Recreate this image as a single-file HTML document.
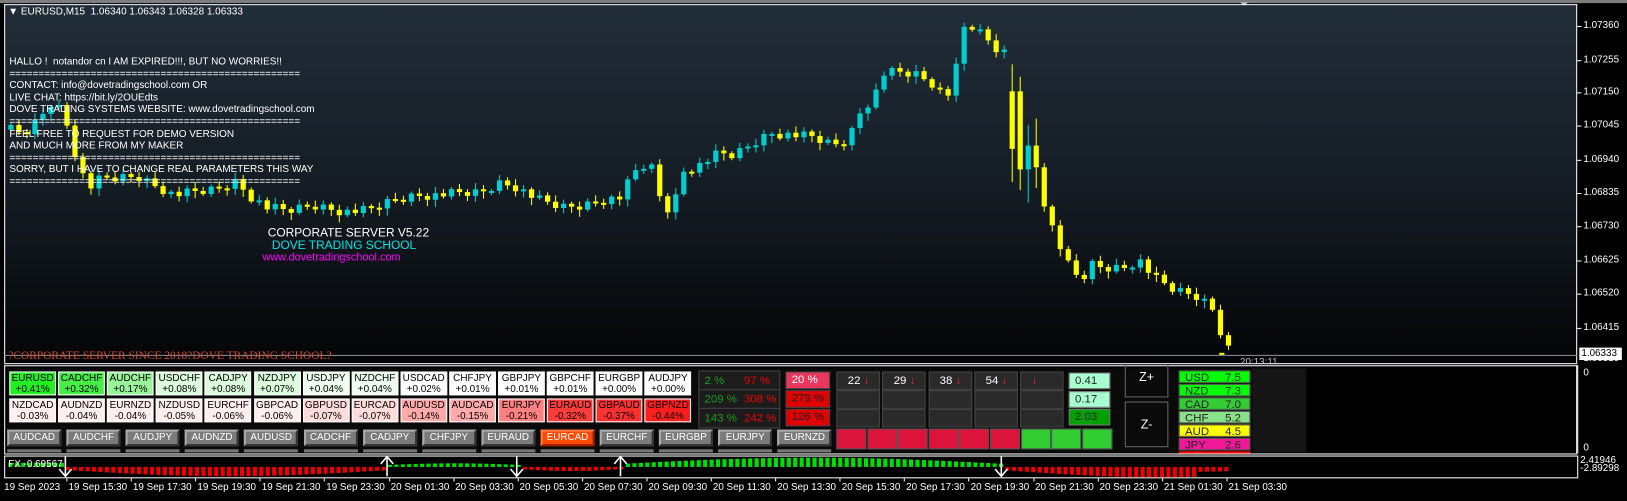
<!DOCTYPE html>
<html><head><meta charset="utf-8">
<style>
*{margin:0;padding:0;box-sizing:border-box}
html,body{width:1627px;height:501px;background:#000;overflow:hidden}
#w{position:absolute;left:0;top:0;width:1568px;height:483px;transform:scale(1.03763);transform-origin:0 0;font-family:"Liberation Sans",sans-serif;background:#000}
.a{position:absolute;white-space:nowrap}
#chart{position:absolute;left:4px;top:4px;width:1516px;height:346px;background:linear-gradient(#212d38 0%,#19222b 35%,#10161c 65%,#06080a 92%,#030405 100%);border-left:1px solid #fff;border-right:1px solid #fff;border-top:1px solid #fff}
.t{font-size:9.6px;color:#fff;line-height:11.6px}
.ax{font-size:9.5px;color:#fff;left:1526px}
.tk{position:absolute;left:1520px;width:4px;height:1px;background:#fff}
.tile{position:absolute;width:45px;height:23px;border:1px solid #fff;font-size:9.6px;line-height:10.5px;text-align:center;color:#000;padding-top:1px}
.btn{position:absolute;width:52px;height:16px;background:#7a7a7a;border:2px solid;border-color:#aaa #333 #333 #aaa;font-size:9.5px;color:#fff;text-align:center;line-height:12px}
.pb{position:absolute;background:#1c1c1c;border:1px solid #444;font-size:11px;line-height:18px}
.gb{position:absolute;width:42px;height:18px;background:#2a2a2a;border:1px solid #444;font-size:11px;color:#fff;line-height:16px;padding-left:10px}
.cs{position:absolute;left:1136px;width:69px;height:12px;font-size:11px;line-height:12px;color:#222;padding-left:5px;border:1px solid #555}
.cs b{font-weight:normal;position:absolute;right:8px}
.tl{position:absolute;top:464px;font-size:9.5px;color:#fff}
</style></head><body><div id="w">
<div class="a" style="left:0;top:0;width:1568px;height:3px;background:#7d7d7d"></div>
<div class="a" style="left:1195px;top:2px;width:0;height:0;border-left:4px solid transparent;border-right:4px solid transparent;border-top:4px solid #bbb"></div>
<div id="chart"></div>
<svg id="cs" class="a" style="left:0;top:0" width="1520" height="350"></svg>
<div class="a" style="left:8px;top:6px;font-size:9.6px;color:#fff">&#9660; EURUSD,M15&nbsp; 1.06340 1.06343 1.06328 1.06333</div>
<div class="a t" style="left:9px;top:54px">HALLO !&nbsp; notandor cn I AM EXPIRED!!!, BUT NO WORRIES!!<br>==================================================<br>CONTACT: info@dovetradingschool.com OR<br>LIVE CHAT: https://bit.ly/2OUEdts<br>DOVE TRADING SYSTEMS WEBSITE: www.dovetradingschool.com<br>==================================================<br>FEEL FREE TO REQUEST FOR DEMO VERSION<br>AND MUCH MORE FROM MY MAKER<br>==================================================<br>SORRY, BUT I HAVE TO CHANGE REAL PARAMETERS THIS WAY<br>==================================================</div>
<div class="a" style="left:258px;top:219px;font-size:11.5px;color:#fff">CORPORATE SERVER V5.22</div>
<div class="a" style="left:262px;top:231px;font-size:11.5px;color:#00e5e5">DOVE TRADING SCHOOL</div>
<div class="a" style="left:253px;top:242px;font-size:10.5px;color:#f0f">www.dovetradingschool.com</div>
<div class="a" style="left:4px;top:342px;width:1516px;height:1px;background:#8a8f96"></div>
<div class="a" style="left:8px;top:337px;font-family:'Liberation Serif',serif;font-size:11px;color:#d84a2a">?CORPORATE SERVER SINCE 2018?DOVE TRADING SCHOOL?</div>
<div class="a" style="left:1195px;top:345px;font-size:9.5px;color:#bbb;height:5px;overflow:hidden;line-height:10px">20:13:11</div>
<div class="a ax" style="top:19px">1.07360</div><div class="tk" style="top:25px"></div>
<div class="a ax" style="top:52px">1.07255</div><div class="tk" style="top:58px"></div>
<div class="a ax" style="top:83px">1.07150</div><div class="tk" style="top:89px"></div>
<div class="a ax" style="top:115px">1.07045</div><div class="tk" style="top:121px"></div>
<div class="a ax" style="top:148px">1.06940</div><div class="tk" style="top:154px"></div>
<div class="a ax" style="top:180px">1.06835</div><div class="tk" style="top:186px"></div>
<div class="a ax" style="top:212px">1.06730</div><div class="tk" style="top:218px"></div>
<div class="a ax" style="top:245px">1.06625</div><div class="tk" style="top:251px"></div>
<div class="a ax" style="top:277px">1.06520</div><div class="tk" style="top:283px"></div>
<div class="a ax" style="top:310px">1.06415</div><div class="tk" style="top:316px"></div>
<div class="a ax" style="top:342px;height:7px;overflow:hidden;line-height:8px">1.06310</div>
<div class="a" style="left:1522px;top:335px;width:41px;height:12px;background:#fff;color:#000;font-size:9.5px;line-height:12px;padding-left:2px">1.06333</div>
<div class="a" style="left:4px;top:350px;width:1516px;height:1px;background:#fff"></div>
<div class="a" style="left:4px;top:352px;width:1516px;height:85px;border:1px solid #fff;border-bottom:none"></div>
<div class="a" style="left:1520px;top:352px;width:1px;height:85px;background:#fff"></div>
<div class="a" style="left:1526px;top:354px;font-size:9.5px;color:#fff">0</div>
<div class="a" style="left:1526px;top:426px;font-size:9.5px;color:#fff">0</div>
<div class="a" style="left:7px;top:355px;width:1200px;height:81px;background:#0a0a0a"></div>
<div id="tiles"></div>
<div class="pb" style="left:673px;top:357px;width:79px;height:20px"><span style="position:absolute;left:5px;color:#1d9a1d">2 %</span><span style="position:absolute;left:43px;color:#e00">97 %</span></div>
<div class="pb" style="left:673px;top:375px;width:79px;height:20px"><span style="position:absolute;left:5px;color:#1d9a1d">209 %</span><span style="position:absolute;left:43px;color:#e00">308 %</span></div>
<div class="pb" style="left:673px;top:393px;width:79px;height:20px"><span style="position:absolute;left:5px;color:#1d9a1d">143 %</span><span style="position:absolute;left:43px;color:#e00">242 %</span></div>
<div class="pb" style="left:757px;top:358px;width:43px;height:17px;background:#e8365e;color:#fff;padding-left:5px;line-height:15px">20 %</div>
<div class="pb" style="left:757px;top:376px;width:43px;height:17px;background:#e00000;color:#222;padding-left:5px;line-height:15px">279 %</div>
<div class="pb" style="left:757px;top:394px;width:43px;height:17px;background:#e00000;color:#222;padding-left:5px;line-height:15px">126 %</div>
<div id="grid"></div>
<div class="a" style="left:1030px;top:359px;width:40px;height:16px;background:#a8ffd0;border:1px solid #777;font-size:11px;line-height:14px;padding-left:5px;color:#222">0.41</div>
<div class="a" style="left:1030px;top:377px;width:40px;height:16px;background:#a8ffd0;border:1px solid #777;font-size:11px;line-height:14px;padding-left:5px;color:#222">0.17</div>
<div class="a" style="left:1030px;top:394px;width:40px;height:16px;background:#00a000;border:1px solid #777;font-size:11px;line-height:14px;padding-left:5px;color:#222">2.03</div>
<div class="a" style="left:1084px;top:352px;width:42px;height:31px;border:1px solid #666;border-top:none;color:#fff;font-size:12px;text-align:center;line-height:22px">Z+</div>
<div class="a" style="left:1084px;top:387px;width:42px;height:44px;border:1px solid #666;color:#fff;font-size:12px;text-align:center;line-height:42px">Z-</div>
<div class="cs" style="top:357px;background:#00ff00">USD<b>7.5</b></div>
<div class="cs" style="top:370px;background:#00ff00">NZD<b>7.3</b></div>
<div class="cs" style="top:383px;background:#33cc33">CAD<b>7.0</b></div>
<div class="cs" style="top:396px;background:#88e088">CHF<b>5.2</b></div>
<div class="cs" style="top:409px;background:#ffff00">AUD<b>4.5</b></div>
<div class="cs" style="top:422px;background:#f01896">JPY<b>2.6</b></div>
<div class="a" style="left:1136px;top:435px;width:69px;height:2px;background:#f00"></div>
<div class="a" style="left:1207px;top:355px;width:52px;height:81px;background:#151515"></div>
<div class="a" style="left:4px;top:437px;width:1516px;height:1px;background:#fff"></div>
<div class="a" style="left:4px;top:439px;width:1517px;height:22px;border:1px solid #fff"></div>
<svg id="hs" class="a" style="left:0;top:439px" width="1520" height="22"></svg>
<div class="a" style="left:8px;top:442px;font-size:9.5px;color:#fff">FX -0.69567</div>
<div class="a" style="left:1523px;top:440px;font-size:9.5px;color:#fff;line-height:8px">2.41946<br>-2.89298</div>
<div id="tl"></div>
</div>
<script>
var S='http://www.w3.org/2000/svg';
function el(p,n,a){var e=document.createElementNS(S,n);for(var k in a)e.setAttribute(k,a[k]);p.appendChild(e);return e}
var P=[[8,125],[20,130],[35,115],[50,95],[62,120],[75,165],[85,180],[95,172],[110,172],[130,170],[150,180],[165,188],[185,185],[205,183],[225,175],[240,190],[255,200],[275,203],[300,198],[330,204],[350,203],[380,192],[400,188],[420,188],[440,186],[460,186],[480,176],[495,180],[515,192],[540,200],[560,198],[580,192],[598,190],[605,170],[615,160],[625,160],[635,195],[645,205],[655,165],[670,160],[690,148],[705,150],[720,140],[740,128],[760,130],[780,132],[800,140],[815,135],[825,110],[840,92],[850,70],[865,70],[880,72],[895,80],[905,90],[915,92],[922,30],[932,25],[945,35],[960,50],[968,52],[975,180],[984,148],[992,139],[1000,180],[1008,210],[1020,240],[1030,262],[1040,270],[1050,255],[1060,258],[1080,258],[1095,250],[1110,268],[1130,280],[1150,285],[1165,295],[1175,322],[1183,338]];
function f(x){for(var i=1;i<P.length;i++)if(x<=P[i][0]){var a=P[i-1],b=P[i];return a[1]+(b[1]-a[1])*(x-a[0])/(b[0]-a[0])}return P[P.length-1][1]}
var svg=document.getElementById('cs'),pc=f(8);
for(var i=0;;i++){var x=8+i*7.72;if(x>1184)break;var c=f(x)+(((i*37)%11)-5)*0.9,o=pc;
if(x>969&&x<981){o=88;}
var t=Math.min(o,c),b=Math.max(o,c);if(b-t<2)b=t+2;
var big=(x>969&&x<1000);var wt=big?14+(i%3)*6:2+(i*13%5),wb=big?20+(i%2)*12:2+(i*7%6);
var col=c<o?'#00ced1':'#ffff00';el(svg,'rect',{x:x+2,y:t-wt,width:1,height:b-t+wt+wb,fill:col});el(svg,'rect',{x:x,y:t,width:5,height:b-t,fill:col});pc=c;}
el(svg,'rect',{x:1175,y:340,width:5,height:2,fill:'#ffff00'});
var T=document.getElementById('tiles'),r1=[['EURUSD','+0.41%','#22ee22'],['CADCHF','+0.32%','#44ee44'],['AUDCHF','+0.17%','#99f399'],['USDCHF','+0.08%','#dcfadc'],['CADJPY','+0.08%','#dcfadc'],['NZDJPY','+0.07%','#dcfadc'],['USDJPY','+0.04%','#eefcee'],['NZDCHF','+0.04%','#eefcee'],['USDCAD','+0.02%','#fff'],['CHFJPY','+0.01%','#fff'],['GBPJPY','+0.01%','#fff'],['GBPCHF','+0.01%','#fff'],['EURGBP','+0.00%','#fff'],['AUDJPY','+0.00%','#fff']],
r2=[['NZDCAD','-0.03%','#ffeeee'],['AUDNZD','-0.04%','#ffeeee'],['EURNZD','-0.04%','#ffeeee'],['NZDUSD','-0.05%','#ffeeee'],['EURCHF','-0.06%','#ffeeee'],['GBPCAD','-0.06%','#ffeeee'],['GBPUSD','-0.07%','#ffdcdc'],['EURCAD','-0.07%','#ffdcdc'],['AUDUSD','-0.14%','#ffaaaa'],['AUDCAD','-0.15%','#ffaaaa'],['EURJPY','-0.21%','#ff8080'],['EURAUD','-0.32%','#ff3c3c'],['GBPAUD','-0.37%','#ff3030'],['GBPNZD','-0.44%','#ff1e1e']];
var h='';for(var k=0;k<14;k++){var X=9+k*47.1;h+='<div class="tile" style="left:'+X+'px;top:358px;background:'+r1[k][2]+'">'+r1[k][0]+'<br>'+r1[k][1]+'</div>';h+='<div class="tile" style="left:'+X+'px;top:384px;background:'+r2[k][2]+'">'+r2[k][0]+'<br>'+r2[k][1]+'</div>';}
var bn=['AUDCAD','AUDCHF','AUDJPY','AUDNZD','AUDUSD','CADCHF','CADJPY','CHFJPY','EURAUD','EURCAD','EURCHF','EURGBP','EURJPY','EURNZD'];
for(k=0;k<14;k++){var X=7+k*57.1;h+='<div class="btn" style="left:'+X+'px;top:414px;'+(k==9?'background:#ff4a00;border-color:#ff7a40 #a02000 #a02000 #ff7a40;':'')+'">'+bn[k]+'</div><div class="a" style="left:'+X+'px;top:433px;width:52px;height:3px;background:#777"></div>';}
T.innerHTML=h;
var G='',nums=['22','29','38','54',''];
for(k=0;k<5;k++){var X=806+k*44.3;for(var r=0;r<3;r++)G+='<div class="gb" style="left:'+X+'px;top:'+(358+r*18)+'px">'+(r==0?nums[k]+' <span style="color:#f22">&#8595;</span>':'')+'</div>';}
for(k=0;k<9;k++){G+='<div class="a" style="left:'+(806+k*29.6)+'px;top:413px;width:29px;height:20px;border:1px solid #555;background:'+(k<6?'#dc143c':'#32cd32')+'"></div>';}
document.getElementById('grid').innerHTML=G;
var hs=document.getElementById('hs'),base=11;
function hv(x){if(x<63)return 4;if(x<373)return -(3+6*Math.sin(Math.PI*(x-63)/310));if(x<498)return 2+1.5*Math.sin(Math.PI*(x-373)/125);if(x<598)return -(2+2*Math.sin(Math.PI*(x-498)/100));if(x<965)return 3+6*Math.sin(Math.PI*(x-598)/367);return -(3+7*Math.sin(Math.PI*Math.min(1,(x-965)/300)))*(x>1150?0.5:1);}
for(var x=8;x<1184;x+=6.2){var v=hv(x);if(v>0)el(hs,'rect',{x:x,y:base-v,width:4,height:v,fill:'#00e000'});else el(hs,'rect',{x:x,y:base,width:4,height:-v,fill:'#ee0000'});}
[[63,1],[373,0],[498,1],[598,0],[965,1]].forEach(function(a){var x=a[0];el(hs,'line',{x1:x,y1:1,x2:x,y2:20,stroke:'#fff','stroke-width':1.5});if(a[1])el(hs,'path',{d:'M'+(x-6)+' 13 L'+x+' 20 L'+(x+6)+' 13',stroke:'#fff',fill:'none','stroke-width':1.5});else el(hs,'path',{d:'M'+(x-6)+' 8 L'+x+' 1 L'+(x+6)+' 8',stroke:'#fff',fill:'none','stroke-width':1.5});});
var L=['19 Sep 2023','19 Sep 15:30','19 Sep 17:30','19 Sep 19:30','19 Sep 21:30','19 Sep 23:30','20 Sep 01:30','20 Sep 03:30','20 Sep 05:30','20 Sep 07:30','20 Sep 09:30','20 Sep 11:30','20 Sep 13:30','20 Sep 15:30','20 Sep 17:30','20 Sep 19:30','20 Sep 21:30','20 Sep 23:30','21 Sep 01:30','21 Sep 03:30'],th='';
for(k=0;k<L.length;k++){var X=k==0?4:66+(k-1)*62.1;th+='<div class="tl" style="left:'+X+'px">'+L[k]+'</div>';if(k>0)th+='<div class="a" style="left:'+(X-2)+'px;top:461px;width:1px;height:3px;background:#fff"></div>';}
document.getElementById('tl').innerHTML=th;
</script>
</body></html>
